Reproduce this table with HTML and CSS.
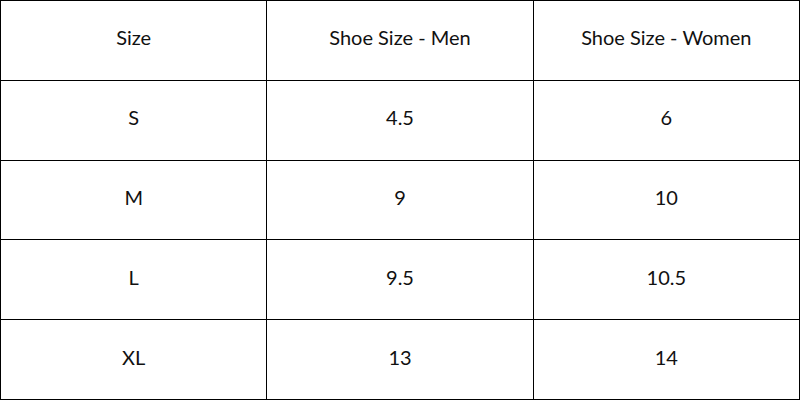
FILE: index.html
```html
<!DOCTYPE html>
<html>
<head>
<meta charset="utf-8">
<link rel="stylesheet" href="styles.css">
</head>
<body>
<table class="sizes">
  <tr><td>Size</td><td>Shoe Size - Men</td><td>Shoe Size - Women</td></tr>
  <tr><td>S</td><td>4.5</td><td>6</td></tr>
  <tr><td>M</td><td>9</td><td>10</td></tr>
  <tr><td>L</td><td>9.5</td><td>10.5</td></tr>
  <tr><td>XL</td><td>13</td><td>14</td></tr>
</table>
</body>
</html>
```
FILE: styles.css
```css
html, body {
  margin: 0;
  padding: 0;
  background: #fff;
}
.sizes {
  width: 800px;
  height: 400px;
  border-collapse: collapse;
  table-layout: fixed;
  font-family: "Lato", "DejaVu Sans", sans-serif;
  font-size: 20px;
  color: #111;
}
.sizes td {
  border: 1px solid #000;
  text-align: center;
  vertical-align: middle;
  height: 79px;
  padding: 0 0 6px 0;
  box-sizing: border-box;
}
```
